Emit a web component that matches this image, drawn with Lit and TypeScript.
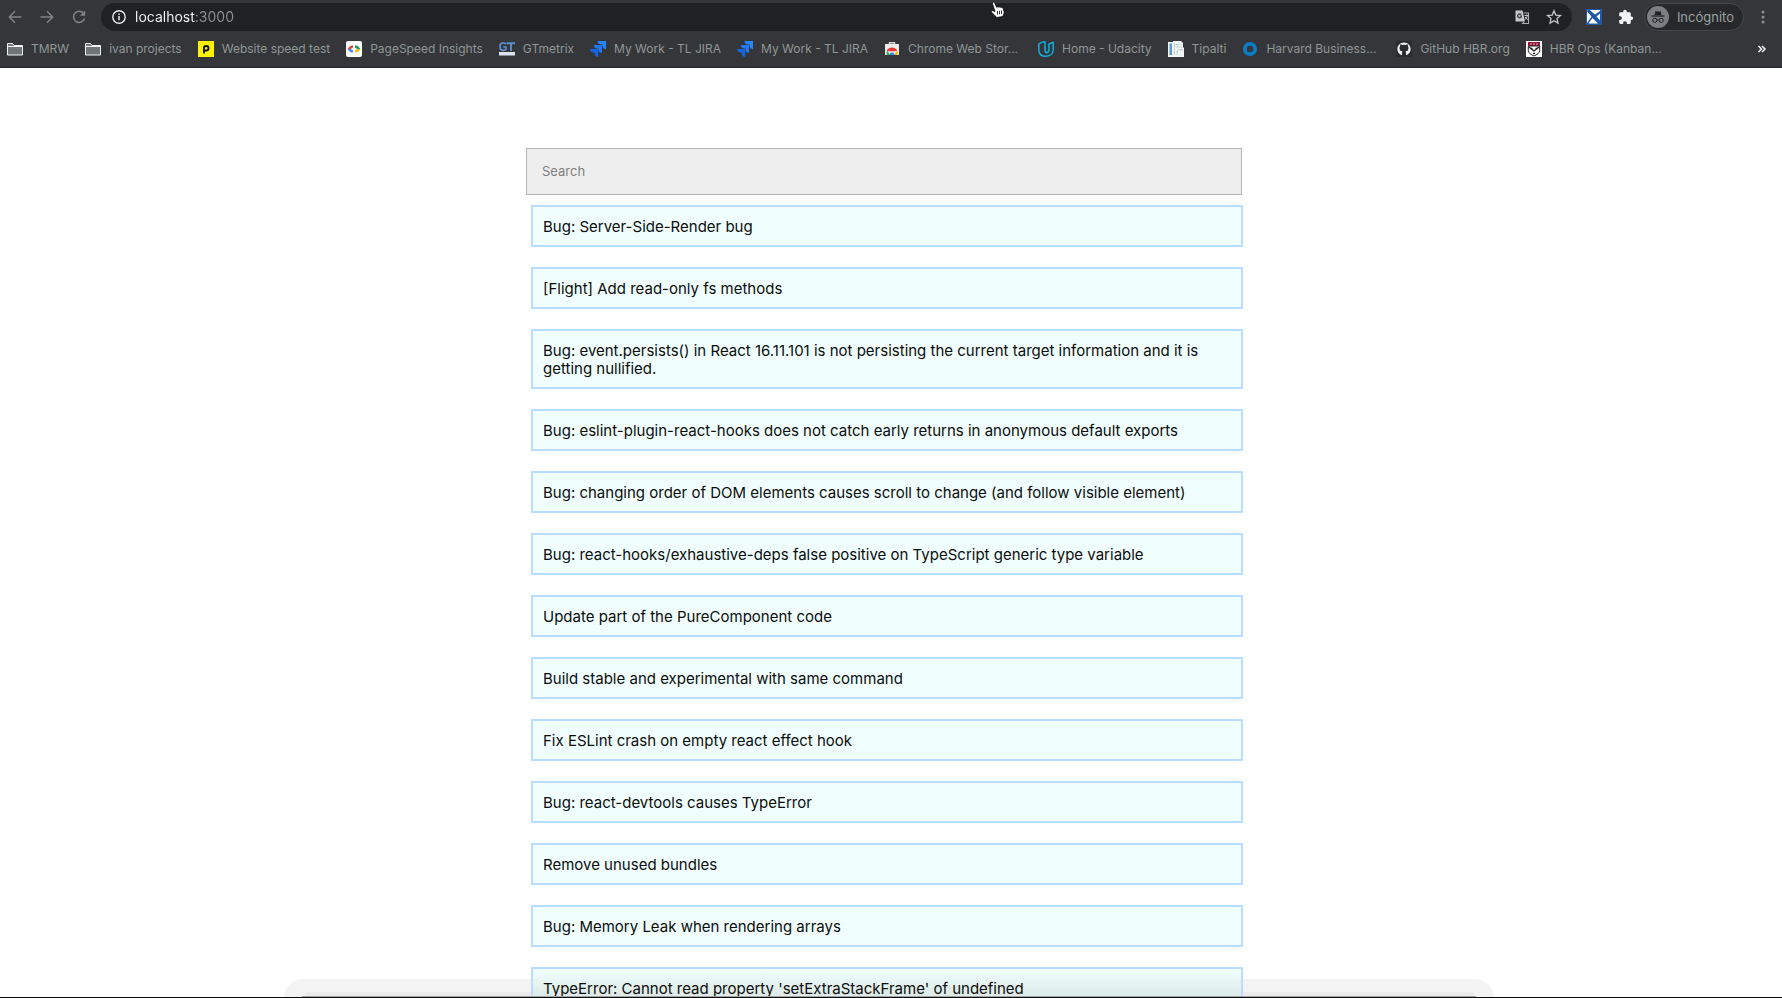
import { LitElement, html, svg, css } from "lit";
import { customElement, state } from "lit/decorators.js";

type Icon = ReturnType<typeof svg>;

const folder = svg`
  <path d="M.5 2.500h5l1.500 2h8.500v9.500h-15z" fill="#6f7678" stroke="#f1f3f4" stroke-width="1"/>
  <path d="M.5 5.500h15" stroke="#f1f3f4" stroke-width="1"/>`;

const jira = svg`
  <path d="M7.500 0H16v8.200c-2 0-3.500-1.600-3.500-3.400V3.500h-1.400C9 3.500 7.500 2 7.500 0z" fill="#2684ff"/>
  <path d="M3.800 4H12v8c-2 0-3.500-1.600-3.500-3.300V7.400H7.200C5.200 7.400 3.800 5.900 3.800 4z" fill="#1f78f4"/>
  <path d="M0 8h8.200v8c-2 0-3.500-1.500-3.500-3.300v-1.300H3.400C1.400 11.400 0 9.900 0 8z" fill="#1565e0"/>`;

const bookmarks: { label: string; icon: Icon; truncated?: boolean }[] = [
  { label: "TMRW", icon: folder },
  { label: "ivan projects", icon: folder },
  {
    label: "Website speed test",
    icon: svg`<rect width="16" height="16" fill="#fff200"/>
      <path d="M6 12.500V6.800C6 5.600 7 5 8.200 5c1.500 0 2.300.9 2.300 2.200S9.600 9.500 8.200 9.500H6" fill="none" stroke="#111" stroke-width="1.900"/>`,
  },
  {
    label: "PageSpeed Insights",
    icon: svg`<rect width="16" height="16" rx="2" fill="#fff"/>
      <path d="M7 4.500 4.500 4.800 1.500 8H4.500L7 6.800z" fill="#ea4335"/><path d="M1.500 8l3 3.200 2.500.3V9.200L4.500 8z" fill="#4285f4"/>
      <path d="M9 4.500l2.500.3 3 3.200h-3L9 6.800z" fill="#0f9d58"/><path d="M14.500 8l-3 3.200-2.500.3V9.200L11.500 8z" fill="#fbbc04"/>`,
  },
  {
    label: "GTmetrix",
    icon: svg`<path d="M7 3.300C6.200 2 4.800 1.800 3.800 1.900 2 2.100 1 3.700 1 5.700s1 3.600 3 3.700c1.200 0 2.200-.4 2.900-1.100V6H4.300" fill="none" stroke="#5b8fd0" stroke-width="1.700"/>
      <path d="M7.800 2.200H16M12 2.200V10" stroke="#5b8fd0" stroke-width="1.900"/><path d="M0 11h16v3.500H0z" fill="#dce3ee"/>`,
  },
  { label: "My Work - TL JIRA", icon: jira },
  { label: "My Work - TL JIRA", icon: jira },
  {
    label: "Chrome Web Stor...",
    truncated: true,
    icon: svg`<path d="M5.500 3.500V1.800h5v1.700" fill="none" stroke="#d8dcdc" stroke-width="1.400"/><path d="M1 3h14v11H1z" fill="#e8eaeb"/>
      <path d="M3 14a5 5 0 0 1 .2-4.500L6 14z" fill="#34a853"/><path d="M2.800 9.800C5 5.500 11 5.500 13.200 9.800L10 10.300H6z" fill="#e8372c"/>
      <path d="M13.200 9.500c.8 1.500.8 3 .2 4.500H10z" fill="#fbbc04"/><path d="M5.500 14a2.500 2.500 0 0 1 5 0z" fill="#3d86f0"/>`,
  },
  {
    label: "Home - Udacity",
    icon: svg`<path d="M.8 2.800v6.500c0 3.500 2.800 6 6.200 6 5 0 8.200-2.600 8.200-6.600V1.300l-4.200 1.700v5.500c0 1.500-1 3.200-3 3.200M.8 2.800l3-1.500v0l3.200-.5v8.200c0 1.700.5 2.700 1.500 2.700M11 3v5.500" fill="none" stroke="#11aee0" stroke-width="1.500" stroke-linejoin="round"/>`,
  },
  {
    label: "Tipalti",
    icon: svg`<path d="M0 1h5V0h8l2 2v4l1 1v9H0z" fill="#f1f5f4"/><path d="M1.500 2.500H4V14H1.500z" fill="#5b9bd5"/>
      <path d="M6.500 2v12M8 3.500h5M8 6h6" stroke="#c3d2d6" stroke-width="1"/><path d="M8.500 10l2-2H15v1.500H10v4H8.500z" fill="#c9d6d9"/>`,
  },
  { label: "Harvard Business...", truncated: true, icon: svg`<circle cx="8" cy="8" r="5.200" fill="none" stroke="#0a7cc4" stroke-width="3.800"/>` },
  {
    label: "GitHub HBR.org",
    icon: svg`<rect width="16" height="16" rx="1" fill="#292b2e"/>
      <path d="M6 14.300c-3-.8-4.700-3.300-4.700-6.200 0-3.700 3-6.600 6.700-6.600s6.700 2.900 6.700 6.600c0 2.900-1.800 5.400-4.700 6.200v-2.600c0-.8-.3-1.200-.6-1.500 2-.3 3.100-1.200 3.100-3.300 0-.8-.3-1.500-.7-2 .1-.5.100-1.200-.1-1.700-.8 0-1.400.5-1.900.8a7 7 0 0 0-3.600 0c-.5-.3-1.100-.8-1.900-.8-.2.500-.2 1.200-.1 1.700-.4.500-.7 1.200-.7 2 0 2.100 1.100 3 3.100 3.300-.3.300-.6.700-.6 1.500z" fill="#eceeef"/>
      <path d="M4.500 4.500h7v5.500h-7z" fill="#292b2e"/>`,
  },
  {
    label: "HBR Ops (Kanban...",
    truncated: true,
    icon: svg`<rect width="16" height="16" fill="#fff"/><path d="M2 1h12v4H2z" fill="#8c1538"/>
      <path d="M2.300 5v4.500c0 2.700 3.300 4.300 5.700 5.500 2.400-1.200 5.700-2.800 5.700-5.500V5z" fill="#fff" stroke="#222" stroke-width="1"/>
      <path d="M4 3h2M7 3h2M10 3h2" stroke="#e2b7c3" stroke-width="1"/><path d="M3 6l5 4 5-4" fill="none" stroke="#222" stroke-width="1.300"/><path d="M4.500 7.500h2M9.500 7.500h2M7 12.300h2" stroke="#222" stroke-width="1.300"/>`,
  },
];

const issues = [
  "Bug: Server-Side-Render bug",
  "[Flight] Add read-only fs methods",
  "Bug: event.persists() in React 16.11.101 is not persisting the current target information and it is getting nullified.",
  "Bug: eslint-plugin-react-hooks does not catch early returns in anonymous default exports",
  "Bug: changing order of DOM elements causes scroll to change (and follow visible element)",
  "Bug: react-hooks/exhaustive-deps false positive on TypeScript generic type variable",
  "Update part of the PureComponent code",
  "Build stable and experimental with same command",
  "Fix ESLint crash on empty react effect hook",
  "Bug: react-devtools causes TypeError",
  "Remove unused bundles",
  "Bug: Memory Leak when rendering arrays",
  "TypeError: Cannot read property 'setExtraStackFrame' of undefined",
];

const glyph = (content: Icon) => html`<svg viewBox="0 0 16 16" width="16" height="16" aria-hidden="true">${content}</svg>`;

@customElement("browser-bar")
class BrowserBar extends LitElement {
  static styles = css`
    :host {
      display: block;
      background: #35363a;
      border-bottom: 1px solid #242528;
      font-family: Inter, "Liberation Sans", sans-serif;
      color: #9aa0a0;
    }
    svg { display: block; flex: none; }
    button {
      display: flex;
      padding: 0;
      border: 0;
      background: none;
      color: inherit;
      font: inherit;
      cursor: pointer;
    }
    .toolbar {
      display: flex;
      align-items: center;
      padding: 3px 11px 0 7px;
    }
    .nav {
      display: flex;
      gap: 16px;
      margin-right: 14px;
      color: #7f8386;
    }
    .address {
      flex: 1;
      display: flex;
      align-items: center;
      height: 28px;
      padding: 0 10px;
      border-radius: 14px;
      background: #202124;
    }
    .address input {
      flex: 1;
      min-width: 0;
      margin: 0 8px;
      padding: 0;
      border: 0;
      outline: 0;
      font: 14px/20px Inter, "Liberation Sans", sans-serif;
      color: transparent;
      background: linear-gradient(to right, #ffffff 61px, #8f9396 61px);
      -webkit-background-clip: text;
      background-clip: text;
    }
    .address .page-actions { display: flex; gap: 16px; color: #c4c7c9; }
    .extensions { display: flex; gap: 16px; margin: 0 10px 0 14px; }
    .profile {
      align-items: center;
      gap: 8px;
      height: 28px;
      box-sizing: border-box;
      padding: 0 9px 0 2px;
      border: 1px solid #46474b;
      border-radius: 14px;
      background: #27282b;
      font-size: 13px;
    }
    .menu { margin-left: 11px; }
    .bookmarks {
      display: flex;
      align-items: center;
      height: 36px;
      padding: 0 12px 0 7px;
    }
    .bookmarks nav { flex: 1; display: flex; gap: 16px; min-width: 0; overflow: hidden; }
    .bookmark {
      display: flex;
      align-items: center;
      gap: 8px;
      font-size: 12px;
      line-height: 16px;
      white-space: nowrap;
      color: #8f9696;
      text-decoration: none;
    }
    .truncated { min-width: 138px; }
    .more { color: #f1f3f4; }
  `;

  render() {
    return html`
      <div class="toolbar">
        <div class="nav">
          <button aria-label="Back">${glyph(svg`<path d="M14.500 8H2.500M8 2.300 2.300 8 8 13.700" fill="none" stroke="currentColor" stroke-width="1.500"/>`)}</button>
          <button aria-label="Forward">${glyph(svg`<path d="M1.500 8h12M8 2.300 13.700 8 8 13.700" fill="none" stroke="currentColor" stroke-width="1.500"/>`)}</button>
          <button aria-label="Reload">${glyph(svg`<path d="M12.800 4.800A5.600 5.600 0 1 0 13.500 9.500" fill="none" stroke="currentColor" stroke-width="1.600"/><path d="M14.200 1.500v5.300H9z" fill="currentColor"/>`)}</button>
        </div>
        <div class="address">
          ${glyph(svg`<circle cx="8" cy="8" r="6.200" fill="none" stroke="#e8eaed" stroke-width="1.400"/><path d="M8 7v4.300M8 4.500v1.500" stroke="#e8eaed" stroke-width="1.500"/>`)}
          <input type="text" aria-label="Address" value="localhost:3000" />
          <div class="page-actions">
            <button aria-label="Translate">${glyph(svg`<path d="M1.500 1.500h7l2.500 11H1.500z" fill="#c4c7c9"/><path d="M9.500 4h5v10.500H8.500l1.700-2" fill="none" stroke="#a9adb0" stroke-width="1.100"/><path d="M7.200 5.500A2 2 0 1 0 7.300 8V7H5.700" fill="none" stroke="#303134" stroke-width="1.200"/><path d="M10.500 6.500h4M12.500 5.500v1M13.500 6.500c-.5 2-1.500 3.200-2.700 4.200M11 8l2.800 3" fill="none" stroke="#c4c7c9" stroke-width="1"/>`)}</button>
            <button aria-label="Bookmark this page">${glyph(svg`<path d="M8 1.800l1.800 4.300 4.700.4-3.500 3.100 1 4.500L8 11.700l-4 2.400 1-4.500-3.500-3.100 4.700-.4z" fill="none" stroke="currentColor" stroke-width="1.300"/>`)}</button>
          </div>
        </div>
        <div class="extensions">
          <button aria-label="Extension">${glyph(svg`<rect width="16" height="16" fill="#2456a6"/><path d="M1 1l4.500 6.500L1 14zM3.500 1H14v1L9 5.500zM14 4.500v7L10.500 7.500zM2.500 14.500l4-5.500 5.500 5.500z" fill="#fff"/><path d="M2 1.500 12.500 12.500" stroke="#2456a6" stroke-width="2.800"/>`)}</button>
          <button aria-label="Extensions">${glyph(svg`<path d="M13.500 7.500h-.7V4.700c0-.8-.6-1.400-1.400-1.400H8.800v-.7a1.800 1.800 0 0 0-3.600 0v.7H2.600c-.8 0-1.400.6-1.400 1.400v2.500h.8a1.900 1.900 0 0 1 0 3.800h-.8v2.500c0 .8.600 1.400 1.400 1.400h2.500v-.8a1.900 1.900 0 0 1 3.800 0v.8h2.500c.8 0 1.400-.6 1.400-1.400v-2.600h.7a1.700 1.700 0 0 0 0-3.400z" fill="#f1f3f4"/>`)}</button>
        </div>
        <button class="profile">
          <svg viewBox="0 0 22 22" width="22" height="22" aria-hidden="true">
            <circle cx="11" cy="11" r="11" fill="#7b7e82"/>
            <path d="M7.500 9 8.500 5l2.500.7 2.500-.7 1 4z" fill="#202124"/><path d="M4.500 10h13" stroke="#202124" stroke-width="1.300"/>
            <circle cx="7.800" cy="14.300" r="2.100" fill="none" stroke="#202124" stroke-width="1"/><circle cx="14.200" cy="14.300" r="2.100" fill="none" stroke="#202124" stroke-width="1"/><path d="M10 14h2" stroke="#202124"/>
          </svg>
          <span>Incógnito</span>
        </button>
        <button class="menu" aria-label="Menu">${glyph(svg`<g fill="#8b8f92"><circle cx="8" cy="3" r="1.500"/><circle cx="8" cy="8" r="1.500"/><circle cx="8" cy="13" r="1.500"/></g>`)}</button>
      </div>
      <div class="bookmarks">
        <nav aria-label="Bookmarks">
          ${bookmarks.map((b) => html`<a class=${b.truncated ? "bookmark truncated" : "bookmark"} href="#">${glyph(b.icon)}<span>${b.label}</span></a>`)}
        </nav>
        <button class="more" aria-label="More bookmarks">${glyph(svg`<path d="M4.500 5l3 3-3 3M8 5l3 3-3 3" fill="none" stroke="currentColor" stroke-width="1.500"/>`)}</button>
      </div>
    `;
  }
}

@customElement("issue-search")
class IssueSearch extends LitElement {
  @state() private query = "";

  static styles = css`
    :host {
      display: block;
      box-sizing: border-box;
      width: 717px;
      max-width: 100%;
      font-family: Inter, "Liberation Sans", sans-serif;
    }
    form { display: flex; margin: 0 1px 0 0; }
    input {
      flex: 1;
      min-width: 0;
      box-sizing: border-box;
      height: 47px;
      padding: 0 15px 1px;
      border: 1px solid #b5b5b5;
      border-radius: 0;
      outline: 0;
      background: #eeeeee;
      font: 13px/16px Inter, "Liberation Sans", sans-serif;
    }
    input::placeholder { color: #808080; opacity: 1; }
    ul {
      display: flex;
      flex-direction: column;
      gap: 20px;
      margin: 10px 0 0 5px;
      padding: 0;
      list-style: none;
    }
    li {
      padding: 11px 10px 9px;
      border: 2px solid #b8ddff;
      background: #f0fffe;
      color: #0c0c0c;
      font-size: 15px;
      line-height: 18px;
    }
    li:nth-child(13) { background: linear-gradient(#f0fffe, #dce9e6 28px); }
  `;

  render() {
    const q = this.query.toLowerCase();
    return html`
      <form role="search" @submit=${(e: Event) => e.preventDefault()}>
        <input type="text" placeholder="Search" aria-label="Search" .value=${this.query}
          @input=${(e: Event) => (this.query = (e.target as HTMLInputElement).value)} />
      </form>
      <ul>${issues.filter((t) => t.toLowerCase().includes(q)).map((t) => html`<li>${t}</li>`)}</ul>
    `;
  }
}

@customElement("app-root")
class AppRoot extends LitElement {
  static styles = css`
    :host {
      display: flex;
      flex-direction: column;
      position: relative;
      height: 100vh;
      overflow: hidden;
      background: #ffffff;
      isolation: isolate;
    }
    main {
      flex: 1;
      min-height: 0;
      overflow: hidden;
      display: flex;
      justify-content: center;
      align-items: flex-start;
      padding: 80px 13px 0 0;
    }
    .dock {
      position: absolute;
      z-index: -1;
      bottom: 0;
      left: 0;
      right: 0;
      display: flex;
      justify-content: center;
      padding-right: 4px;
    }
    .dock-plate {
      width: 68%;
      height: 19px;
      border-radius: 30px 30px 0 0;
      background: #f3f3f3;
      display: flex;
      align-items: flex-end;
      justify-content: center;
    }
    .dock-shelf {
      width: 97%;
      height: 6px;
      border-radius: 12px 12px 0 0;
      background: #ebebeb;
    }
    .edge {
      position: absolute;
      left: 0;
      right: 0;
      bottom: 0;
      display: flex;
      justify-content: center;
      padding-right: 4px;
      border-bottom: 1px solid #0a0a0a;
    }
    .edge-line { width: 66%; height: 1px; background: #a5a5a5; }
    .pointer { position: absolute; top: 1px; left: 990px; }
  `;

  render() {
    return html`
      <browser-bar></browser-bar>
      <main><issue-search></issue-search></main>
      <div class="dock"><div class="dock-plate"><div class="dock-shelf"></div></div></div>
      <div class="edge"><div class="edge-line"></div></div>
      <svg class="pointer" viewBox="0 0 16 17" width="16" height="17" aria-hidden="true">
        <path d="M2.500 1.500c.8-.8 1.800-.3 2.200.5l2 4.300c.5-.7 1.700-.7 2.200 0 .6-.5 1.600-.4 2 .3.700-.5 1.800-.2 2.100.6l1 3.200c.4 1.500-.1 2.600-.7 3.400l-.3 1.700-6.200 1c-1.500-1.500-3.300-3.300-5.300-5.200-.8-1 .3-2 1.500-1.600l2 .9-2.500-7.600c-.2-.6-.2-1.100 0-1.500z" fill="#fff" stroke="#000" stroke-width=".8"/>
        <path d="M7.500 10v3.500M9.500 9.800v3.500M11.500 9.600v3.500" stroke="#222" stroke-width=".9"/>
      </svg>
    `;
  }
}
